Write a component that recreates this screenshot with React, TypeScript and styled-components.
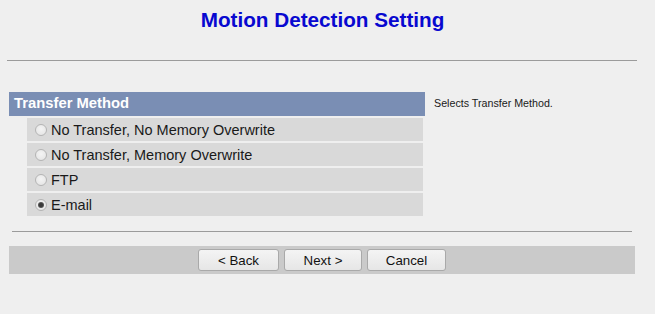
import React, { useState } from "react";
import styled, { createGlobalStyle } from "styled-components";

const GlobalStyle = createGlobalStyle`
  html, body {
    margin: 0;
    padding: 0;
    background: #efefef;
  }
  body {
    font-family: "Liberation Sans", Arial, sans-serif;
    color: #1a1a1a;
  }
`;

const Page = styled.div`
  width: 645px;
  display: flex;
  flex-direction: column;
`;

const Title = styled.h1`
  margin: 8px 0 0;
  text-align: center;
  font-size: 20.7px;
  line-height: 23px;
  font-weight: bold;
  color: #0808d0;
`;

const Rule = styled.div<{ $left: number; $width: number; $top: number }>`
  margin-top: ${(p) => p.$top}px;
  margin-left: ${(p) => p.$left}px;
  width: ${(p) => p.$width}px;
  height: 0;
  border-top: 1px solid #9b9b9b;
`;

const Section = styled.div`
  display: flex;
  margin-top: 31px;
  padding-left: 9px;
`;

const Main = styled.div`
  width: 416px;
  display: flex;
  flex-direction: column;
`;

const HeaderBar = styled.div`
  height: 23px;
  padding: 0 0 1px 5px;
  background: #7a8eb4;
  color: #ffffff;
  font-size: 14.8px;
  font-weight: bold;
  line-height: 23px;
`;

const OptionList = styled.div`
  display: flex;
  flex-direction: column;
  gap: 2px;
  margin: 2px 2px 0 18px;
`;

const OptionRow = styled.label`
  display: flex;
  align-items: center;
  height: 22px;
  padding: 1px 0 0 8px;
  background: #d9d9d9;
  font-size: 14.5px;
  line-height: 22px;
  color: #1a1a1a;
  cursor: default;
`;

const Radio = styled.input.attrs({ type: "radio" })`
  appearance: none;
  -webkit-appearance: none;
  box-sizing: border-box;
  width: 12px;
  height: 12px;
  margin: 0 4px 0 0;
  border-radius: 50%;
  border: 1px solid #b4b4b4;
  background: radial-gradient(circle at 50% 40%, #f4f4f4 0%, #e2e2e2 100%);
  position: relative;

  &:checked::after {
    content: "";
    position: absolute;
    left: 2px;
    top: 2px;
    width: 6px;
    height: 6px;
    border-radius: 50%;
    background: radial-gradient(circle, #3a3a3a 35%, #7a7a7a 100%);
  }
`;

const Description = styled.div`
  margin-left: 9px;
  padding-top: 5px;
  font-size: 10.7px;
  line-height: 13px;
  color: #1a1a1a;
`;

const ButtonBar = styled.div`
  margin-top: 14px;
  margin-left: 9px;
  width: 626px;
  height: 22px;
  padding: 3px 0;
  background: #cacaca;
  display: flex;
  justify-content: center;
  gap: 5px;
`;

const Button = styled.button<{ $w: number }>`
  box-sizing: border-box;
  width: ${(p) => p.$w}px;
  height: 22px;
  padding: 1px 0 0;
  border: 1px solid #a9a9a9;
  border-radius: 3px;
  background: linear-gradient(#f4f4f4, #e6e6e6);
  font-family: "Liberation Sans", Arial, sans-serif;
  font-size: 13.3px;
  color: #111;
  line-height: 19px;
`;

const options = [
  "No Transfer, No Memory Overwrite",
  "No Transfer, Memory Overwrite",
  "FTP",
  "E-mail",
];

export default function App() {
  const [selected, setSelected] = useState(3);
  return (
    <>
      <GlobalStyle />
      <Page>
        <Title>Motion Detection Setting</Title>
        <Rule $top={29} $left={7} $width={630} />
        <Section>
          <Main>
            <HeaderBar>Transfer Method</HeaderBar>
            <OptionList>
              {options.map((o, i) => (
                <OptionRow key={o}>
                  <Radio
                    name="transfer"
                    checked={selected === i}
                    onChange={() => setSelected(i)}
                  />
                  {o}
                </OptionRow>
              ))}
            </OptionList>
          </Main>
          <Description>Selects Transfer Method.</Description>
        </Section>
        <Rule $top={15} $left={12} $width={620} />
        <ButtonBar>
          <Button $w={81}>&lt; Back</Button>
          <Button $w={78}>Next &gt;</Button>
          <Button $w={79}>Cancel</Button>
        </ButtonBar>
      </Page>
    </>
  );
}
